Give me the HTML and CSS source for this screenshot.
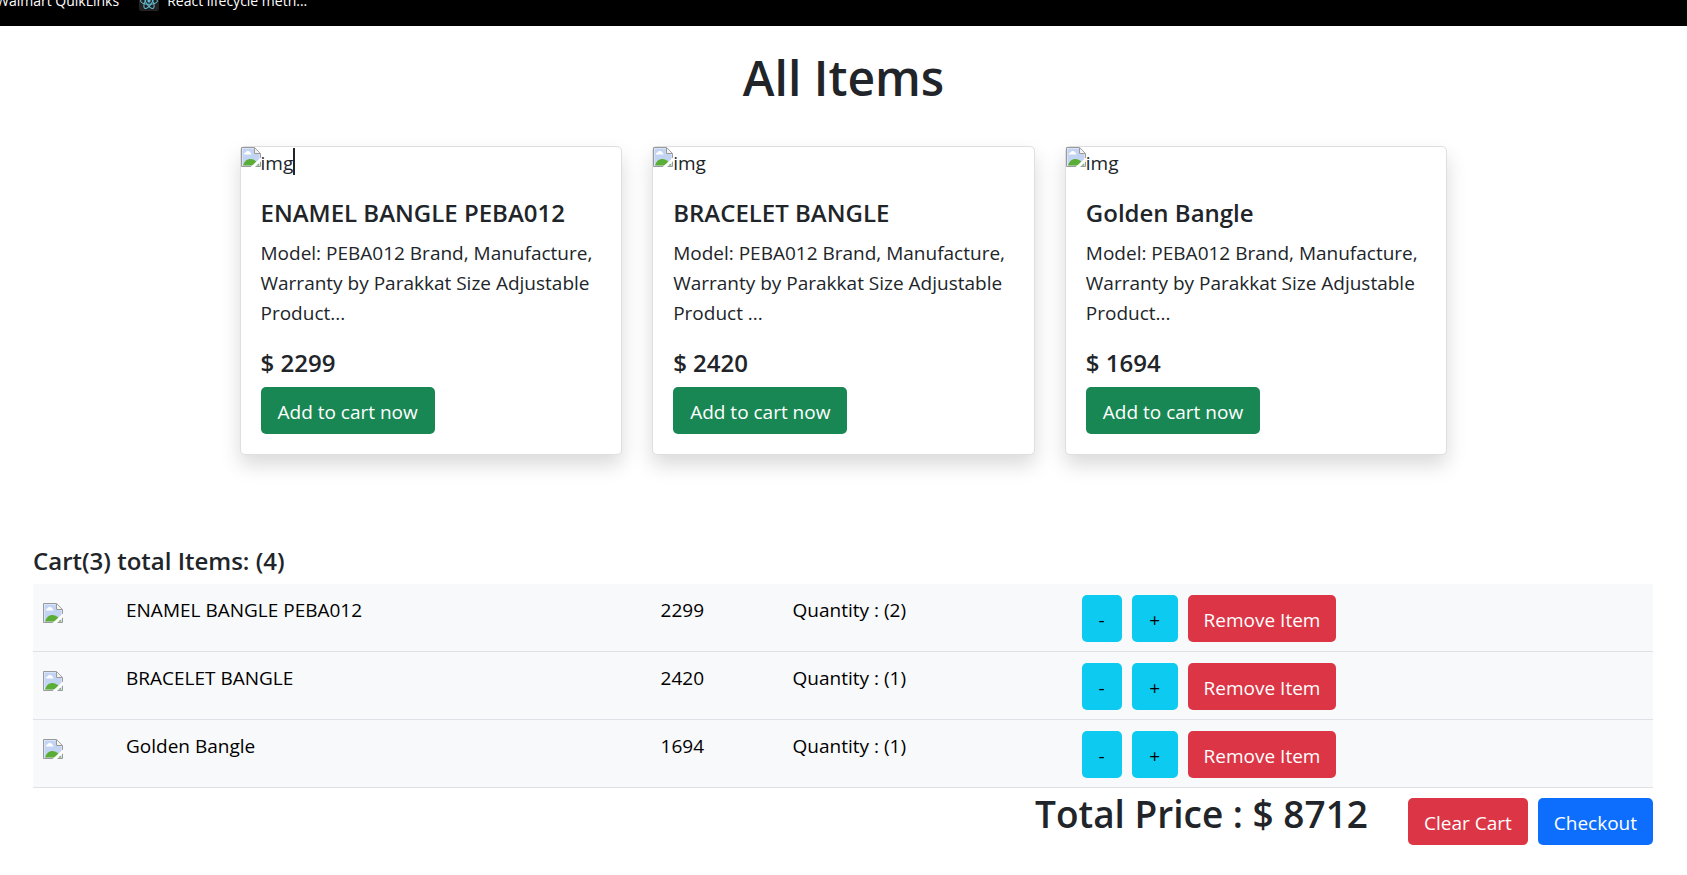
FILE: index.html
```html
<!DOCTYPE html>
<html lang="en">
<head>
<meta charset="utf-8">
<title>All Items</title>
<link rel="stylesheet" href="styles.css">
</head>
<body>
<svg class="defs" aria-hidden="true">
  <symbol id="broken" viewBox="0 0 20 20">
    <path d="M0 0h14l6 6v14H0z" fill="#eef3fc"/>
    <path d="M1.500 1.500h12v5.500h5v11.500h-17z" fill="#c3d4f3"/>
    <path d="M3 7.500a1.600 1.600 0 0 1 1.500-2 2.600 2.600 0 0 1 4.700 0 1.500 1.500 0 0 1 1 2z" fill="#fff"/>
    <path d="M2 18.500c1.500-4.500 4-6.500 7.500-6.500s6.500 2.500 9 6.500z" fill="#5aad35"/>
    <path d="M.5 19.500V.5h13l6 6v13z" fill="none" stroke="#9a9a9a"/>
    <path d="M13.500 1v5.500H19" fill="#f3f3f3" stroke="#9a9a9a"/>
    <path d="M9.500 20 20 10.500v3.800L14 20z" fill="#fff"/>
  </symbol>
</svg>
<nav class="bookmarks">
  <a class="bookmark" href="#">Walmart QuikLinks</a>
  <a class="bookmark" href="#">
    <svg class="react" viewBox="0 0 20 20" aria-hidden="true">
      <rect width="20" height="20" rx="2" fill="#222"/>
      <g fill="none" stroke="#61bfd8" stroke-width="1">
        <ellipse cx="10" cy="10" rx="8.500" ry="3.300"/>
        <ellipse cx="10" cy="10" rx="8.500" ry="3.300" transform="rotate(60 10 10)"/>
        <ellipse cx="10" cy="10" rx="8.500" ry="3.300" transform="rotate(120 10 10)"/>
      </g>
      <circle cx="10" cy="10" r="1.600" fill="#61bfd8"/>
    </svg>
    React lifecycle meth...
  </a>
</nav>
<main>
  <section class="products">
    <h1 class="page-title">All Items</h1>
    <div class="card-row">
      <article class="card">
        <div class="card-img"><svg class="broken"><use href="#broken"/></svg><span>img</span><i class="caret"></i></div>
        <div class="card-body">
          <h5 class="heading">ENAMEL BANGLE PEBA012</h5>
          <p class="card-text">Model: PEBA012 Brand, Manufacture, Warranty by Parakkat Size Adjustable Product...</p>
          <h5 class="heading">$ 2299</h5>
          <button class="btn success" type="button">Add to cart now</button>
        </div>
      </article>
      <article class="card">
        <div class="card-img"><svg class="broken"><use href="#broken"/></svg><span>img</span></div>
        <div class="card-body">
          <h5 class="heading">BRACELET BANGLE</h5>
          <p class="card-text">Model: PEBA012 Brand, Manufacture, Warranty by Parakkat Size Adjustable Product ...</p>
          <h5 class="heading">$ 2420</h5>
          <button class="btn success" type="button">Add to cart now</button>
        </div>
      </article>
      <article class="card">
        <div class="card-img"><svg class="broken"><use href="#broken"/></svg><span>img</span></div>
        <div class="card-body">
          <h5 class="heading">Golden Bangle</h5>
          <p class="card-text">Model: PEBA012 Brand, Manufacture, Warranty by Parakkat Size Adjustable Product...</p>
          <h5 class="heading">$ 1694</h5>
          <button class="btn success" type="button">Add to cart now</button>
        </div>
      </article>
    </div>
  </section>
  <section class="cart">
    <h5 class="heading">Cart(3) total Items: (4)</h5>
    <table class="table">
      <colgroup><col class="c-img"><col class="c-name"><col class="c-price"><col class="c-qty"><col></colgroup>
      <tbody>
        <tr>
          <td><svg class="broken thumb"><use href="#broken"/></svg></td>
          <td>ENAMEL BANGLE PEBA012</td><td>2299</td><td>Quantity : (2)</td>
          <td><div class="actions"><button class="btn info" type="button">-</button><button class="btn info plus" type="button">+</button><button class="btn danger" type="button">Remove Item</button></div></td>
        </tr>
        <tr>
          <td><svg class="broken thumb"><use href="#broken"/></svg></td>
          <td>BRACELET BANGLE</td><td>2420</td><td>Quantity : (1)</td>
          <td><div class="actions"><button class="btn info" type="button">-</button><button class="btn info plus" type="button">+</button><button class="btn danger" type="button">Remove Item</button></div></td>
        </tr>
        <tr>
          <td><svg class="broken thumb"><use href="#broken"/></svg></td>
          <td>Golden Bangle</td><td>1694</td><td>Quantity : (1)</td>
          <td><div class="actions"><button class="btn info" type="button">-</button><button class="btn info plus" type="button">+</button><button class="btn danger" type="button">Remove Item</button></div></td>
        </tr>
      </tbody>
    </table>
    <div class="summary">
      <h2 class="total">Total Price : $ 8712</h2>
      <button class="btn danger" type="button">Clear Cart</button>
      <button class="btn primary" type="button">Checkout</button>
    </div>
  </section>
</main>
</body>
</html>
```
FILE: styles.css
```css
* { box-sizing: border-box; }
body {
  margin: 0;
  background: #fff;
  color: #212529;
  font-family: "Segoe UI", "Open Sans", sans-serif;
  font-size: 19px;
  line-height: 30px;
}
h1, h2, h5, p { margin: 0; }
.defs { display: none; }

.bookmarks {
  display: flex;
  align-items: flex-end;
  gap: 20px;
  height: 26px;
  padding-bottom: 15px;
  background: #000;
  overflow: hidden;
}
.bookmark {
  display: flex;
  gap: 8px;
  flex: none;
  color: #fff;
  font-size: 14px;
  line-height: 20px;
  text-decoration: none;
}
.bookmark:first-child { margin-left: -4px; }
.react { width: 20px; height: 20px; }

.products {
  max-width: 1208px;
  margin: 0 auto;
  padding-top: 22px;
}
.page-title {
  font-size: 48px;
  font-weight: 600;
  line-height: 60px;
  text-align: center;
}
.card-row {
  display: grid;
  grid-template-columns: repeat(3, 1fr);
  gap: 30px;
  margin-top: 38px;
}
.card {
  border: 1px solid #dfdfdf;
  border-radius: 5px;
  background: #fff;
  box-shadow: 0 10px 20px rgba(0, 0, 0, .15);
}
.card-img { display: flex; height: 30px; line-height: 32px; }
.broken { width: 20px; height: 20px; flex: none; }
.caret { width: 2px; height: 27px; margin-top: 1px; background: #212529; }
.card-body { padding: 21px 20px 20px; }
.heading {
  margin-bottom: 10px;
  font-size: 24px;
  font-weight: 600;
  line-height: 30px;
}
.card-text { margin-bottom: 20px; }
.card-text + .heading { margin-bottom: 9px; }

.btn {
  display: block;
  padding: 10px 16px 6px;
  border: 0;
  border-radius: 5px;
  color: #fff;
  font: inherit;
  line-height: 31px;
  white-space: nowrap;
}
.success { padding-left: 17px; padding-right: 17px; background: #198754; }
.info { min-width: 40px; background: #0dcaf0; color: #000; }
.plus { min-width: 46px; }
.danger { background: #dc3545; }
.primary { background: #0d6efd; }

.cart { padding: 91px 34px 0 33px; }
.cart .heading { margin-bottom: 8px; }
.table {
  width: 100%;
  border-collapse: separate;
  border-spacing: 0;
  table-layout: fixed;
  background: #f8f9fa;
  color: #000;
}
.table td {
  height: 68px;
  padding: 11px 10px 9px;
  border-bottom: 1px solid #dee2e6;
  vertical-align: top;
}
.c-img { width: 83px; }
.c-name { width: 33%; }
.c-price { width: 132px; }
.c-qty { width: 279px; }
.thumb { display: block; margin-top: 8px; }
.actions { display: flex; gap: 10px; padding-left: 10px; }
.summary {
  display: flex;
  justify-content: flex-end;
  gap: 10px;
  padding-top: 10px;
}
.total {
  margin-right: 30px;
  font-size: 37px;
  font-weight: 600;
  line-height: 32px;
}
```
